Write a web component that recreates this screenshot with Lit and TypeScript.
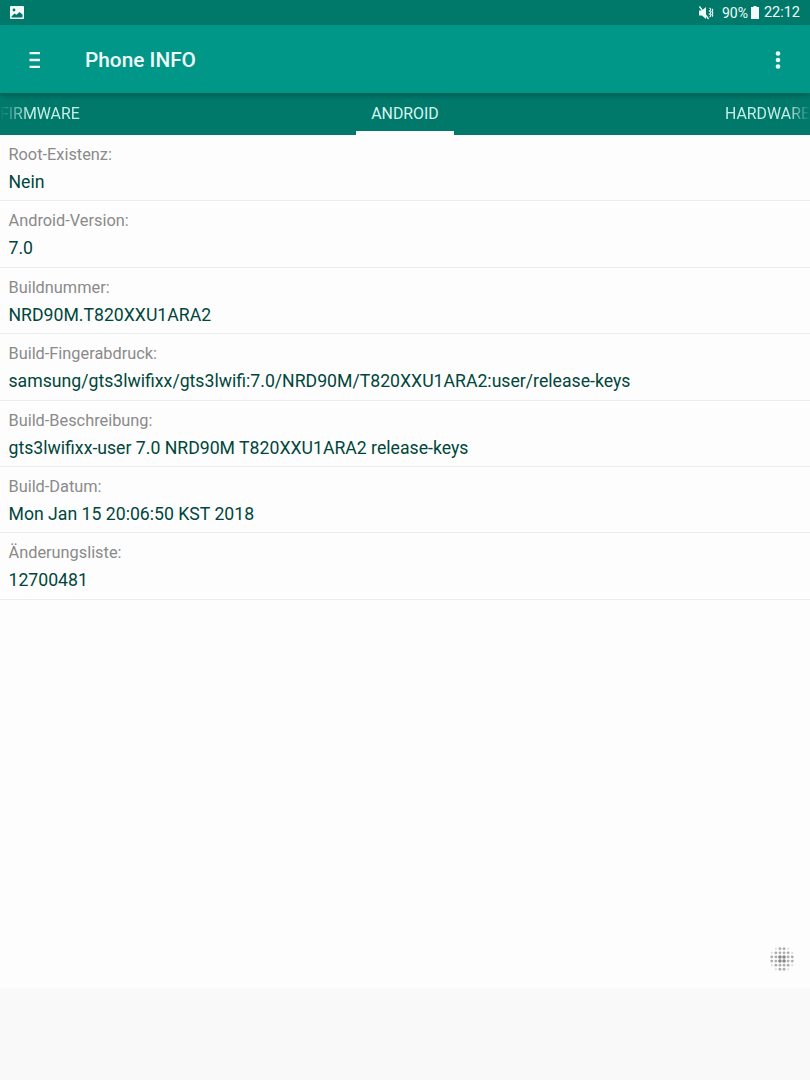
import { LitElement, html, svg, css } from "lit";
import { customElement } from "lit/decorators.js";

const ROWS: [string, string][] = [
  ["Root-Existenz:", "Nein"],
  ["Android-Version:", "7.0"],
  ["Buildnummer:", "NRD90M.T820XXU1ARA2"],
  ["Build-Fingerabdruck:", "samsung/gts3lwifixx/gts3lwifi:7.0/NRD90M/T820XXU1ARA2:user/release-keys"],
  ["Build-Beschreibung:", "gts3lwifixx-user 7.0 NRD90M T820XXU1ARA2 release-keys"],
  ["Build-Datum:", "Mon Jan 15 20:06:50 KST 2018"],
  ["Änderungsliste:", "12700481"],
];

const DOTS: [number, number, number][] = [];
for (let y = -2.5; y <= 2.5; y++) {
  for (let x = -2.5; x <= 2.5; x++) {
    const d = Math.hypot(x, y);
    if (d > 3) continue;
    DOTS.push([x * 4.1, y * 4.1, d]);
  }
}

@customElement("app-root")
export class AppRoot extends LitElement {
  static styles = css`
    :host {
      display: flex;
      flex-direction: column;
      width: 810px;
      height: 1080px;
      overflow: hidden;
      font-family: Roboto, "Liberation Sans", sans-serif;
      background: #fdfdfd;
    }
    .status {
      height: 25px;
      flex: none;
      display: flex;
      align-items: center;
      box-sizing: border-box;
      background: #00796b;
      color: #f2fbf9;
      font-size: 14.5px;
      padding: 0 10px;
    }
    .status .spacer { flex: 1; }
    .status .pct { margin-left: 8px; font-size: 14px; }
    .status .bat { margin: 0 5px 0 3px; }
    .status svg { display: block; }
    .appbar {
      height: 68px;
      flex: none;
      display: flex;
      align-items: center;
      box-sizing: border-box;
      background: #009688;
      color: #f0fbf9;
      padding: 1px 29px 0 29px;
      position: relative;
      z-index: 1;
      box-shadow: 0 3px 5px rgba(0, 0, 0, 0.22);
    }
    .title {
      font-size: 20.8px;
      font-weight: 500;
      margin-left: 44px;
      flex: 1;
    }
    .appbar svg { display: block; }
    .tabs {
      height: 42px;
      flex: none;
      display: grid;
      grid-template-columns: 1fr 98px 1fr;
      background: #00796b;
      color: #c4ece6;
      font-size: 15.9px;
      overflow: hidden;
    }
    .tab {
      display: flex;
      align-items: center;
      white-space: nowrap;
      height: 42px;
      box-sizing: border-box;
      padding-bottom: 1px;
    }
    .tab.left {
      justify-content: flex-start;
      -webkit-mask-image: linear-gradient(to right, transparent 0, #000 30px);
      mask-image: linear-gradient(to right, transparent 0, #000 30px);
    }
    .tab.mid {
      justify-content: center;
      border-bottom: 4px solid #fdfdfd;
      padding-bottom: 0;
      padding-top: 2px;
      color: #d6f4ef;
    }
    .tab.right {
      justify-content: flex-end;
      -webkit-mask-image: linear-gradient(to left, transparent 0, #000 22px);
      mask-image: linear-gradient(to left, transparent 0, #000 22px);
    }
    .list { flex: none; }
    .row {
      height: 66.4px;
      box-sizing: border-box;
      border-bottom: 1px solid #ececec;
      padding: 10px 8.5px 0;
    }
    .label {
      font-size: 16.33px;
      line-height: 19px;
      color: #8a8a8a;
    }
    .value {
      margin-top: 8px;
      font-size: 17.67px;
      line-height: 20px;
      color: #00463b;
      white-space: nowrap;
    }
    .body {
      flex: 1;
      display: flex;
      align-items: flex-end;
      justify-content: flex-end;
      padding: 0 16px 17px 0;
    }
    .body svg { display: block; }
    .nav {
      height: 92px;
      flex: none;
      background: #f9f9f9;
    }
  `;

  render() {
    return html`
      <div class="status">
        <svg width="14" height="14" viewBox="0 0 14 14">
          <rect width="14" height="13" rx="1" fill="#f2fbf9" />
          <path d="M1.5 10.5 L4.5 7.5 L6.5 8.8 L9.5 6 L12.5 8.5 V11.5 H1.5 Z" fill="#00796b" />
          <circle cx="4" cy="4" r="1.4" fill="#00796b" />
        </svg>
        <span class="spacer"></span>
        <svg width="15" height="14" viewBox="0 0 15 14">
          <path d="M0 4.5 H3 L7 1 V13 L3 9.5 H0 Z" fill="#f2fbf9" />
          <path d="M0.5 0.5 L9.5 13" stroke="#f2fbf9" stroke-width="1.3" />
          <path d="M10.500 2 q2.500 1.500 0 3 q2.500 1.500 0 3 q2.500 1.500 0 3 M13 3 q1.500 1 0 2.500 q1.500 1.500 0 3 q1.500 1 0 2" fill="none" stroke="#f2fbf9" stroke-width="1.1" />
        </svg>
        <span class="pct">90%</span>
        <svg class="bat" width="8" height="13" viewBox="0 0 8 13">
          <path d="M2.500 0 H5.500 V1 H8 V13 H0 V1 H2.500 Z" fill="#f2fbf9" />
        </svg>
        <span>22:12</span>
      </div>
      <div class="appbar">
        <svg width="12" height="16" viewBox="0 0 12 16">
          <path d="M0.500 1 H11 M0.500 8 H11 M0.500 15 H11" stroke="#f0fbf9" stroke-width="2.400" />
        </svg>
        <span class="title">Phone INFO</span>
        <svg width="6" height="18" viewBox="0 0 6 18">
          <circle cx="3" cy="2.500" r="2.300" fill="#f0fbf9" />
          <circle cx="3" cy="9" r="2.300" fill="#f0fbf9" />
          <circle cx="3" cy="15.500" r="2.300" fill="#f0fbf9" />
        </svg>
      </div>
      <div class="tabs">
        <div class="tab left">FIRMWARE</div>
        <div class="tab mid">ANDROID</div>
        <div class="tab right">HARDWARE</div>
      </div>
      <div class="list">
        ${ROWS.map(
          ([l, v]) => html`<div class="row">
            <div class="label">${l}</div>
            <div class="value">${v}</div>
          </div>`
        )}
      </div>
      <div class="body">
        <svg width="24" height="24" viewBox="-12 -12 24 24">
          ${DOTS.map(([x, y, d]) => {
            const r = d < 1.5 ? 1.8 : d < 2.6 ? 1.4 : 1;
            const o = d < 1.5 ? 0.7 : d < 2.6 ? 0.48 : 0.22;
            return svg`<circle cx=${x} cy=${y} r=${r} fill="#555" fill-opacity=${o} />`;
          })}
        </svg>
      </div>
      <div class="nav"></div>
    `;
  }
}
